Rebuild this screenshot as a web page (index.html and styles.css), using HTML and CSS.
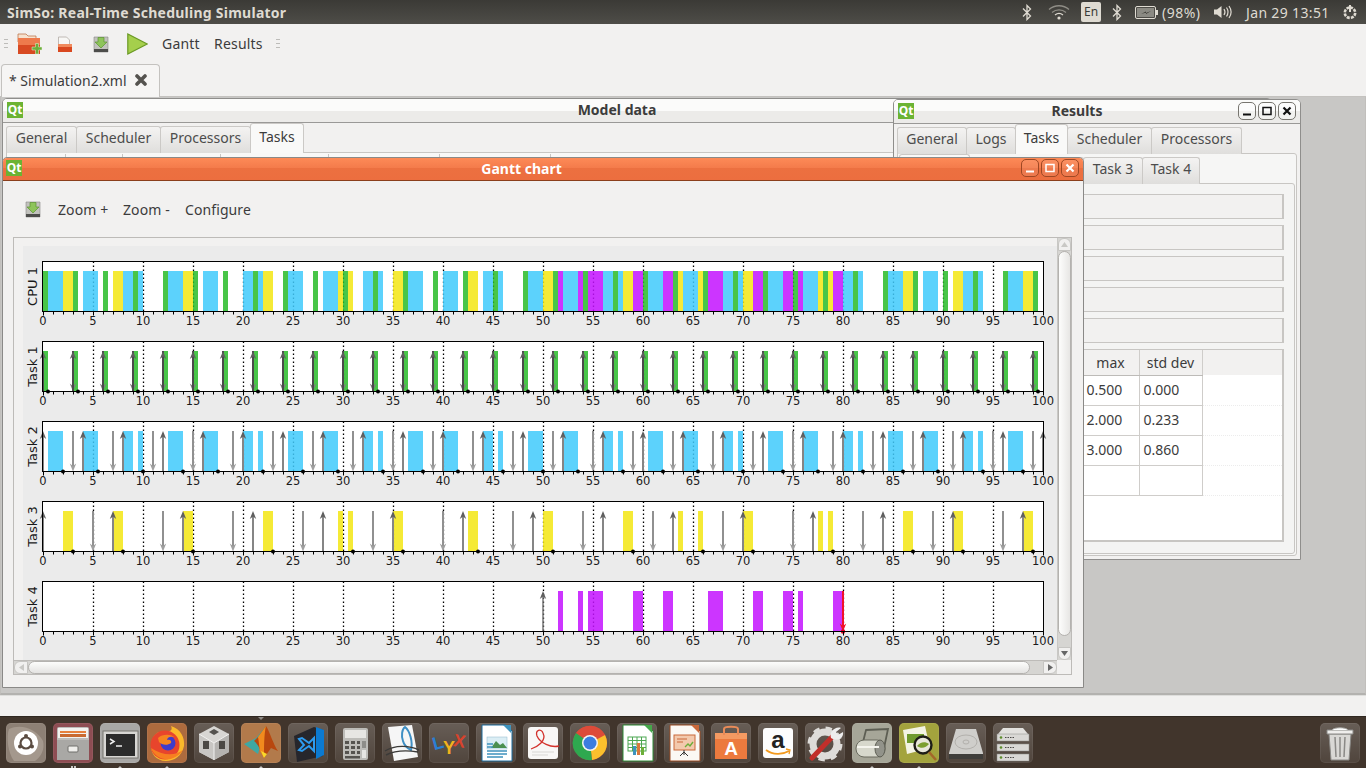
FILE: index.html
```html
<!DOCTYPE html>
<html lang="en">
<head>
<meta charset="utf-8">
<title>SimSo: Real-Time Scheduling Simulator</title>
<link rel="stylesheet" href="styles.css">
</head>
<body>
<header class="panel">
  <div class="panel-title">SimSo: Real-Time Scheduling Simulator</div>
  <div class="indicators">
    <svg class="ind ind-bt" width="10" height="17" viewBox="0 0 10 17"><path d="M1 4.5l7.5 7.5L5 15.5V1.5L8.5 5 1 12.5" fill="none" stroke="#dfdbd2" stroke-width="1.3"/></svg>
    <svg class="ind ind-wifi" width="22" height="16" viewBox="0 0 22 16"><g fill="none" stroke="#8f8d86" stroke-width="1.3"><path d="M1 5.5c5.500-5 14.500-5 20 0"/><path d="M4 8.500c4-3.500 10-3.500 14 0"/></g><path d="M7 11c2.500-2 5.500-2 8 0" fill="none" stroke="#dfdbd2" stroke-width="1.3"/><circle cx="11" cy="14" r="1.600" fill="#dfdbd2"/></svg>
    <span class="ind-en">En</span>
    <svg class="ind ind-bt2" width="10" height="17" viewBox="0 0 10 17"><path d="M1 4.500l7.500 7.500L5 15.500V1.500L8.500 5 1 12.500" fill="none" stroke="#dfdbd2" stroke-width="1.300"/></svg>
    <svg class="ind ind-batt" width="23" height="13" viewBox="0 0 23 13"><rect x=".5" y=".5" width="20" height="12" rx="1.500" fill="#4c4b46" stroke="#dfdbd2"/><rect x="2" y="2" width="17" height="9" fill="#8b8a83"/><rect x="21" y="4" width="2" height="5" fill="#dfdbd2"/><path d="M6 8l5-2.500v1.500L16 5l-5 3V6.500z" fill="#35342f"/></svg>
    <span class="ind-text ind-pct">(98%)</span>
    <svg class="ind ind-vol" width="20" height="16" viewBox="0 0 20 16"><path d="M1 5.500h3L8.500 2v12L4 10.500H1z" fill="#dfdbd2"/><g fill="none" stroke="#dfdbd2" stroke-width="1.200"><path d="M11 5c1.300 2 1.300 4 0 6"/><path d="M13.500 3.500c2 3 2 6 0 9"/><path d="M16 2c2.800 4 2.800 8 0 12"/></g></svg>
    <span class="ind-text ind-date">Jan 29 13:51</span>
    <svg class="ind ind-gear" width="16" height="17" viewBox="0 0 16 17"><path d="M8 3.500a5.200 5.200 0 1 1-.01 0" fill="none" stroke="#dfdbd2" stroke-width="2.600" stroke-dasharray="3 1.100"/><path d="M8 1v7" stroke="#dfdbd2" stroke-width="2"/></svg>
  </div>
</header>

<nav class="toolbar">
  <span class="grip"></span>
  <svg class="tool-new" width="25" height="22" viewBox="0 0 25 22"><path d="M1 1h8l2 2h8v6H1z" fill="#f6e2cf" stroke="#b8683a" stroke-width=".7"/><path d="M1 5h22v16H1z" fill="#d84a22"/><path d="M1 5h22v7H1z" fill="#ee7a4c"/><path d="M15 14h3.500v-3.500h3V14H25v3h-3.500v4h-3v-4H15z" fill="#6cae3a" stroke="#e6f3d8" stroke-width=".5"/></svg>
  <svg class="tool-open" width="16" height="17" viewBox="0 0 16 17"><path d="M1.500 1h8l3 3v7h-11z" fill="#f8f7f5" stroke="#b3aca6" stroke-width=".8"/><path d="M1 8h14v8H1z" fill="#d9481f"/><path d="M1 8h14v3H1z" fill="#f08a5d"/></svg>
  <svg class="tool-save" width="16" height="17" viewBox="0 0 16 17"><path d="M1 1h14v15H1z" fill="#c2c2bd" stroke="#888" stroke-width=".6"/><path d="M1 13h14v3H1z" fill="#4d4d4b"/><path d="M5 1.500h6V6h3l-6 6-6-6h3z" fill="#8ec45a" stroke="#5c9432" stroke-width=".7"/></svg>
  <svg class="tool-play" width="21" height="22" viewBox="0 0 21 22"><path d="M.8 1v20L20.200 11z" fill="#a5cf4c" stroke="#6b9a24" stroke-width="1.200"/></svg>
  <span class="tool-text tool-gantt">Gantt</span>
  <span class="tool-text tool-results">Results</span>
  <span class="grip grip-end"></span>
</nav>

<div class="doc-tabs">
  <div class="doc-tab">
    <span>* Simulation2.xml</span>
    <svg width="12" height="12" viewBox="0 0 12 12"><path d="M2 2l8 8M10 2l-8 8" stroke="#55534f" stroke-width="3.600" stroke-linecap="round"/></svg>
  </div>
</div>

<main class="mdi">
  <section class="win win-model">
    <div class="titlebar"><span class="qt">Qt</span><span class="win-title">Model data</span></div>
    <div class="win-body">
      <div class="tabs tabs-model">
        <span class="tab">General</span><span class="tab">Scheduler</span><span class="tab">Processors</span><span class="tab tab-on">Tasks</span>
      </div>
      <div class="model-pane">
        <i></i><i></i><i></i><i></i><i></i><i></i>
      </div>
    </div>
  </section>

  <section class="win win-results">
    <div class="titlebar"><span class="qt">Qt</span><span class="win-title">Results</span>
      <div class="winbtns">
        <span class="winbtn"><svg width="10" height="10" viewBox="0 0 10 10"><path d="M1 8.500h8" stroke="currentColor" stroke-width="2"/></svg></span>
        <span class="winbtn"><svg width="10" height="10" viewBox="0 0 10 10"><rect x="1" y="1.500" width="8" height="7" fill="none" stroke="currentColor" stroke-width="1.500"/></svg></span>
        <span class="winbtn"><svg width="10" height="10" viewBox="0 0 10 10"><path d="M1.500 1.500l7 7M8.500 1.500l-7 7" stroke="currentColor" stroke-width="2.200"/></svg></span>
      </div>
    </div>
    <div class="win-body">
      <div class="tabs tabs-results">
        <span class="tab">General</span><span class="tab">Logs</span><span class="tab tab-on">Tasks</span><span class="tab">Scheduler</span><span class="tab">Processors</span>
      </div>
      <div class="pane">
        <div class="tabs tabs-sub">
          <span class="tab tab-on">General</span><span class="tab">Task 1</span><span class="tab">Task 2</span><span class="tab">Task 3</span><span class="tab">Task 4</span>
        </div>
        <div class="subpane">
          <div class="stat-row"></div><div class="stat-row"></div><div class="stat-row"></div><div class="stat-row"></div><div class="stat-row"></div>
          <div class="stat-table">
            <table>
              <colgroup><col class="c-a"><col class="c-b"><col class="c-c"><col></colgroup>
              <thead><tr><th></th><th>max</th><th>std dev</th><th class="ghost-h"></th></tr></thead>
              <tbody>
                <tr><td></td><td>0.500</td><td>0.000</td><td class="ghost"></td></tr>
                <tr><td></td><td>2.000</td><td>0.233</td><td class="ghost"></td></tr>
                <tr><td></td><td>3.000</td><td>0.860</td><td class="ghost"></td></tr>
                <tr><td></td><td></td><td></td><td class="ghost"></td></tr>
              </tbody>
            </table>
          </div>
        </div>
      </div>
    </div>
  </section>

  <section class="win win-gantt">
    <div class="titlebar titlebar-on"><span class="qt">Qt</span><span class="win-title">Gantt chart</span>
      <div class="winbtns">
        <span class="winbtn"><svg width="10" height="10" viewBox="0 0 10 10"><path d="M1 8.500h8" stroke="currentColor" stroke-width="2"/></svg></span>
        <span class="winbtn"><svg width="10" height="10" viewBox="0 0 10 10"><rect x="1" y="1.500" width="8" height="7" fill="none" stroke="currentColor" stroke-width="1.500"/></svg></span>
        <span class="winbtn"><svg width="10" height="10" viewBox="0 0 10 10"><path d="M1.500 1.500l7 7M8.500 1.500l-7 7" stroke="currentColor" stroke-width="2.200"/></svg></span>
      </div>
    </div>
    <div class="gantt-tools">
      <svg width="16" height="17" viewBox="0 0 16 17"><path d="M1 1h14v15H1z" fill="#c2c2bd" stroke="#888" stroke-width=".6"/><path d="M1 13h14v3H1z" fill="#4d4d4b"/><path d="M5 1.500h6V6h3l-6 6-6-6h3z" fill="#8ec45a" stroke="#5c9432" stroke-width=".7"/></svg>
      <span class="gt gt-1">Zoom +</span><span class="gt gt-2">Zoom -</span><span class="gt gt-3">Configure</span>
    </div>
    <div class="scroll-frame">
      <div class="plot-view"><svg id="plots" class="plots" width="1034" height="414" viewBox="0 0 1034 414"></svg></div>
      <div class="vbar">
        <span class="sb-btn"><svg width="7" height="5" viewBox="0 0 7 5"><path d="M3.500 0L7 5H0z" fill="#c9c8c5"/></svg></span>
        <span class="v-thumb"></span>
        <span class="v-grip"></span>
        <span class="sb-btn sb-end"><svg width="7" height="5" viewBox="0 0 7 5"><path d="M0 0h7L3.500 5z" fill="#666"/></svg></span>
      </div>
      <div class="hbar">
        <span class="sb-btn"><svg width="5" height="7" viewBox="0 0 5 7"><path d="M5 0v7L0 3.500z" fill="#c9c8c5"/></svg></span>
        <span class="h-thumb"></span>
        <span class="h-rest"></span>
        <span class="sb-btn sb-end"><svg width="5" height="7" viewBox="0 0 5 7"><path d="M0 0l5 3.500L0 7z" fill="#666"/></svg></span>
      </div>
    </div>
  </section>
</main>

<div class="status"></div>

<footer class="dock">
  <div class="tile t-ubuntu"><svg viewBox="0 0 40 40"><path d="M3 6c12-6 28 0 34 12 2 8-2 16-8 20H8C2 30 0 14 3 6z" fill="#b8aca0" opacity=".55"/><circle cx="20" cy="20" r="12" fill="#fff"/><circle cx="20" cy="20" r="5.500" fill="none" stroke="#5b4c42" stroke-width="2.200"/><g fill="#5b4c42"><circle cx="20" cy="13" r="2"/><circle cx="14" cy="23.500" r="2"/><circle cx="26" cy="23.500" r="2"/></g></svg></div>
  <div class="tile t-files pip-2"><svg viewBox="0 0 40 40"><rect x="4" y="4" width="32" height="33" rx="2" fill="#bdbcb9"/><rect x="5" y="5" width="30" height="10" fill="#f3f2ef"/><rect x="7" y="8" width="26" height="2" fill="#e6813d"/><rect x="7" y="11" width="26" height="3" fill="#c96a30"/><rect x="4" y="17" width="32" height="20" fill="#a9a8a5"/><rect x="15" y="23" width="10" height="6" rx="1" fill="#efeeeb" stroke="#6f6e6b"/></svg></div>
  <div class="tile t-term pip"><svg viewBox="0 0 40 40"><rect x="3" y="8" width="35" height="27" fill="#d7d6d3" stroke="#77756f"/><rect x="6" y="11" width="29" height="22" fill="#2b2b2b"/><path d="M10 16l4 2.500-4 2.500" fill="none" stroke="#eee" stroke-width="1.500"/><path d="M16 23h6" stroke="#eee" stroke-width="1.500"/></svg></div>
  <div class="tile t-fire pip"><svg viewBox="0 0 40 40"><path d="M24 3c10 3 14 12 13 20-2 10-10 15-18 15C9 38 3 30 4 21c1-6 4-10 8-12 0 2 0 3 1 4 2-4 6-5 10-5 2-1 2-3 1-5z" fill="#fbb92b"/><circle cx="18" cy="22" r="14.500" fill="#e8452c"/><path d="M4 25c4 12 22 17 32 2-8 6-20 6-32-2z" fill="#f77f21"/><circle cx="21" cy="20" r="7.500" fill="#3f3ccb"/><path d="M11 15c4-4 13-4 16-1-3-1-7 0-7 3 3-1 5 1 4 3-4 3-9 2-12-1z" fill="#f5841f"/></svg></div>
  <div class="tile"><svg viewBox="0 0 40 40"><path d="M20 3l15 8v18l-15 8-15-8V11z" fill="#d8d6d3"/><path d="M20 20l15-9v18l-15 8z" fill="#b5b3b0"/><path d="M20 20L5 11v18l15 8z" fill="#c8c6c3"/><path d="M15 9l5-3 5 3-5 3z" fill="#55524e"/><rect x="9" y="18" width="6" height="8" fill="#4b4844"/><rect x="25" y="18" width="6" height="8" fill="#4b4844"/><path d="M20 20v17M20 20L5 11M20 20l15-9" stroke="#f1f0ee" stroke-width="1"/></svg></div>
  <div class="tile t-matlab pip pip-top"><svg viewBox="0 0 40 40"><path d="M3 21l12-6L25 3l-8 28z" fill="#3fa8a3"/><path d="M17 14L25 3c4 6 7 18 12 25l-7-3-7 10c-3-7-6-14-10-17z" fill="#b8470f"/><path d="M25 3c-2 8-2 22-2 32l-4-7c-1-5-1-9-2-14z" fill="#f18a1e"/><path d="M20 28l3 7 3-4c-2-1-4-2-6-3z" fill="#f8d92c"/></svg></div>
  <div class="tile"><svg viewBox="0 0 40 40"><path d="M6 13l20-9 9 3v26l-26 6z" fill="#26262c"/><path d="M28 4l8 3v25l-8 4z" fill="#0b7ad1"/><path d="M11 16l3-1 7 5 5-5v13l-5-5-7 5-3-1 5-5z" fill="none" stroke="#2d9cf0" stroke-width="2"/></svg></div>
  <div class="tile"><svg viewBox="0 0 40 40"><rect x="8" y="5" width="25" height="32" rx="2" fill="#bdbcb8"/><rect x="10" y="7" width="21" height="8" fill="#e7e6e3"/><g fill="#55534f"><rect x="10" y="18" width="4" height="3"/><rect x="16" y="18" width="4" height="3"/><rect x="22" y="18" width="3" height="3"/><rect x="10" y="23" width="4" height="3"/><rect x="16" y="23" width="4" height="3"/><rect x="22" y="23" width="3" height="3"/><rect x="10" y="28" width="4" height="3"/><rect x="16" y="28" width="4" height="3"/><rect x="22" y="28" width="3" height="3"/><rect x="10" y="33" width="15" height="2.500"/></g><rect x="27" y="18" width="4" height="7" fill="#8e8d89"/><rect x="27" y="27" width="4" height="8" fill="#e6e5e2"/></svg></div>
  <div class="tile"><svg viewBox="0 0 40 40"><path d="M6 4l24-2 6 32-24 4z" fill="#f6f6f6"/><path d="M29 27c2-8-1-19-6-23-3 2-4 9-2 14 1 4 4 7 8 9z" fill="none" stroke="#3f8fc4" stroke-width="2"/><path d="M3 28c10-6 24-6 34-1M4 32c8-4 20-5 32-3" fill="none" stroke="#3b3a38" stroke-width="1.400"/></svg></div>
  <div class="tile"><svg viewBox="0 0 40 40"><text class="lyx lyx-l" x="4" y="26" transform="rotate(-15 9 22)">L</text><text class="lyx lyx-y" x="14" y="31">Y</text><text class="lyx lyx-x" x="24" y="24" transform="rotate(10 30 20)">X</text></svg></div>
  <div class="tile"><svg viewBox="0 0 40 40"><path d="M6 2h24l6 6v30H6z" fill="#fff" stroke="#1d6d9e" stroke-width="1"/><path d="M27 2h8v8z" fill="#3f93bd"/><rect x="11" y="14" width="20" height="12" fill="#dbeef5" stroke="#8eb9cc" stroke-width=".5"/><path d="M15 25l5-7 4 4 3-2 4 5z" fill="#4a8f4f"/><g stroke="#3f93bd" stroke-width="1.300"><path d="M11 21h6M11 24h6M11 28h20M11 31h20M11 34h16"/></g></svg></div>
  <div class="tile"><svg viewBox="0 0 40 40"><rect x="5" y="4" width="30" height="32" rx="3" fill="#f8f7f6"/><path d="M8 26c6-2 16-8 12-16-2-5-8-3-6 3 3 7 14 12 22 10" fill="none" stroke="#d3312c" stroke-width="1.300"/><path d="M9 29h22M9 32h16" stroke="#d8d7d4" stroke-width="1.200"/></svg></div>
  <div class="tile"><svg viewBox="0 0 40 40"><circle cx="20" cy="20" r="17" fill="#dd4b39"/><path d="M20 20L35 12a17 17 0 0 1-13 25z" fill="#fbc02d"/><path d="M20 20l2 17A17 17 0 0 1 6 10z" fill="#2ea84f"/><path d="M6 10A17 17 0 0 1 35 12H20z" fill="#dd4b39"/><circle cx="20" cy="20" r="8" fill="#f4f4f4"/><circle cx="20" cy="20" r="6.500" fill="#3b7de0"/></svg></div>
  <div class="tile"><svg viewBox="0 0 40 40"><path d="M6 2h24l6 6v30H6z" fill="#fff" stroke="#2f8a36" stroke-width="1"/><path d="M27 2h8v8z" fill="#45a84a"/><g fill="none" stroke="#4da752" stroke-width="1"><rect x="11" y="14" width="18" height="14"/><path d="M11 17.500h18M11 21h18M11 24.500h18M15.500 14v14M20 14v14M24.500 14v14"/></g><rect x="16" y="23" width="3" height="9" fill="#3f93bd"/><rect x="20" y="20" width="3" height="12" fill="#d9773d"/><rect x="24" y="24" width="3" height="8" fill="#6cae3a"/></svg></div>
  <div class="tile"><svg viewBox="0 0 40 40"><path d="M6 2h24l6 6v30H6z" fill="#fbf8f4" stroke="#9a4a22" stroke-width="1"/><path d="M27 2h8v8z" fill="#c9683a"/><rect x="10" y="12" width="21" height="15" fill="#f3c9ad" stroke="#c9683a"/><path d="M13 16h10M13 19h6" stroke="#c9683a" stroke-width="1.200"/><path d="M21 24l3-3 2 2 3-4" fill="none" stroke="#6cae3a" stroke-width="1.400"/><path d="M20 27v5M20 29l-4 4M20 29l4 4" stroke="#333" stroke-width="1"/></svg></div>
  <div class="tile"><svg viewBox="0 0 40 40"><path d="M4 10h32v26H4z" fill="#ec7a3e"/><path d="M4 10h32v6H4z" fill="#f49a62"/><path d="M13 12V6c0-3 14-3 14 0v6" fill="none" stroke="#e98b58" stroke-width="2"/><text class="soft-a" x="20" y="32">A</text></svg></div>
  <div class="tile"><svg viewBox="0 0 40 40"><rect x="5" y="5" width="30" height="30" rx="3" fill="#fdfdfd"/><text class="amazon-a" x="20" y="25">a</text><path d="M8 27c7 5 16 5 23 1" fill="none" stroke="#f39a1e" stroke-width="1.800"/><path d="M28 26l4 1-1 4" fill="none" stroke="#f39a1e" stroke-width="1.300"/></svg></div>
  <div class="tile"><svg viewBox="0 0 40 40"><circle cx="20" cy="21" r="12" fill="none" stroke="#dedcd9" stroke-width="7"/><circle cx="20" cy="21" r="15" fill="none" stroke="#dedcd9" stroke-width="5" stroke-dasharray="6 5.800"/><path d="M7 35L28 13" stroke="#c22f2a" stroke-width="5" stroke-linecap="round"/><path d="M26 15c-2-6 4-12 10-10l-5 4 2 3 5-3c1 6-5 10-12 6z" fill="#eeeded"/></svg></div>
  <div class="tile t-roll pip"><svg viewBox="0 0 40 40"><path d="M14 7l22-1-5 24-23 1z" fill="none" stroke="#5d5e53" stroke-width="1.800"/><rect x="4" y="17" width="29" height="17" rx="8" fill="#d7d8cc" stroke="#68695d"/><ellipse cx="28" cy="25.500" rx="5" ry="8.500" fill="#92938a" stroke="#5d5e53"/><path d="M5 24h22" stroke="#f5f5ee" stroke-width="2"/></svg></div>
  <div class="tile t-mag pip"><svg viewBox="0 0 40 40"><path d="M4 7l22-4 5 22-23 6z" fill="#f3f3e3"/><rect x="8" y="11" width="17" height="9" fill="#6f9a2d"/><circle cx="24" cy="22" r="8.500" fill="#e8e7d9" stroke="#1e1d17" stroke-width="2.400"/><path d="M18 23c3-4 8-5 12-2-3 4-8 5-12 2z" fill="#7c9f2f"/><path d="M30 29l7 8" stroke="#a4672a" stroke-width="2.600"/></svg></div>
  <div class="tile"><svg viewBox="0 0 40 40"><path d="M10 6h20l7 24v6H3v-6z" fill="#cfcecb"/><ellipse cx="20" cy="19" rx="11" ry="7" fill="none" stroke="#b2b0ac"/><ellipse cx="20" cy="19" rx="3" ry="2" fill="none" stroke="#b2b0ac"/><rect x="3" y="31" width="34" height="5" fill="#3f3e3b"/></svg></div>
  <div class="tile"><svg viewBox="0 0 40 40"><path d="M10 5h20l5 6H5z" fill="#e2e1de"/><g fill="#d9d8d5" stroke="#8d8c88" stroke-width=".5"><rect x="4" y="11" width="32" height="7"/><rect x="4" y="21" width="32" height="7"/><rect x="4" y="31" width="32" height="7"/></g><g fill="#5c8d2c"><circle cx="8" cy="14.500" r="1.300"/><circle cx="8" cy="24.500" r="1.300"/><circle cx="8" cy="34.500" r="1.300"/></g><g stroke="#4c4b48" stroke-dasharray="1.500 1"><path d="M12 14.500h9M12 24.500h9M12 34.500h9"/></g></svg></div>
  <div class="tile tile-trash"><svg viewBox="0 0 40 40"><path d="M9 11h22l-2 26H11z" fill="#d9d8d5" stroke="#8a8986"/><path d="M7 7h26v4H7z" fill="#efeeec" stroke="#8a8986"/><path d="M15 14l1 20M20 14v20M25 14l-1 20" stroke="#8a8986" stroke-width="1.500"/><path d="M12 7c2-3 14-3 16 0" fill="#fff" stroke="#a3a29f"/></svg></div>
</footer>
<script src="plots.js"></script>
</body>
</html>
```

FILE: styles.css
```css
* { box-sizing: border-box; }
html, body { margin: 0; height: 100%; }
body {
  width: 1366px; height: 768px; overflow: hidden;
  display: flex; flex-direction: column;
  background: #f2f1f0; color: #3c3c3c;
  font: 14px "Noto Sans", "Open Sans", sans-serif;
}

/* top panel */
.panel {
  height: 24px; flex: none; display: flex; align-items: center;
  background: linear-gradient(#3b3a36, #4e4d48);
  color: #dfdbd2; padding-left: 7px;
}
.panel-title { font-weight: 700; font-size: 14px; letter-spacing: .25px; white-space: nowrap; }
.indicators { margin-left: auto; display: flex; align-items: center; height: 24px; padding-right: 8px; }
.ind { flex: none; }
.ind-text { font-size: 14px; white-space: nowrap; color: #dfdbd2; }
.ind-wifi { margin-left: 16px; }
.ind-en { width: 20px; height: 20px; margin-left: 11px; background: #dfdbd2; color: #3c3b37; border-radius: 2px; font-size: 12px; line-height: 20px; text-align: center; }
.ind-bt2 { margin-left: 11px; }
.ind-batt { margin-left: 13px; }
.ind-pct { margin-left: 4px; width: 38px; letter-spacing: .5px; }
.ind-vol { margin-left: 13px; }
.ind-date { margin-left: 13px; width: 84px; letter-spacing: .35px; }
.ind-gear { margin-left: 12px; }

/* toolbar */
.toolbar { height: 40px; flex: none; display: flex; align-items: center; padding-left: 4px; }
.grip { width: 4px; height: 11px; background: repeating-linear-gradient(#bdbcb9 0 1px, transparent 1px 4px); flex: none; }
.tool-new { margin-left: 9px; }
.tool-open { margin-left: 15px; }
.tool-save { margin-left: 20px; }
.tool-play { margin-left: 18px; }
.tool-text { font-size: 14px; color: #3c3c3c; letter-spacing: .2px; padding-bottom: 1px; }
.tool-gantt { margin-left: 14px; width: 52px; }
.tool-results { width: 62px; }
.grip-end { margin-left: 0; }

/* document tabs */
.doc-tabs { height: 33px; flex: none; padding-left: 1px; display: flex; align-items: flex-end; border-bottom: 1px solid #c4c2bf; }
.doc-tab {
  width: 159px; height: 33px; margin-bottom: -1px;
  display: flex; align-items: center; gap: 8px; padding: 0 0 2px 7px;
  background: #f6f5f4; border: 1px solid #c4c2bf; border-bottom: 0;
  border-radius: 4px 4px 0 0; font-size: 14px; white-space: nowrap;
}

/* mdi area */
.mdi { position: relative; height: 598px; flex: none; background: #c8c7c5; border: 1px solid #c1bfbc; border-top: 0; border-bottom: 2px solid #b3b2af; }
.status { height: 21px; flex: none; background: #f2f1f0; border-top: 1px solid #dededc; }

.win { position: absolute; display: flex; flex-direction: column; background: #f2f1f0; border: 1px solid #8f8e8c; border-radius: 5px 5px 0 0; }
.win-model { left: 1px; top: 1px; width: 1270px; height: 440px; z-index: 1; }
.win-results { left: 892px; top: 2px; width: 408px; height: 461px; z-index: 2; }
.win-gantt { left: 1px; top: 60px; width: 1082px; height: 531px; border-color: #8a8987; z-index: 3; }

.titlebar {
  position: relative; height: 24px; flex: none; display: flex; align-items: center;
  background: linear-gradient(#fbfbfa 0 50%, #ecebe9 50% 100%);
  border-bottom: 1px solid #9a9997; border-radius: 4px 4px 0 0;
  padding-left: 4px;
}
.titlebar-on { background: linear-gradient(#fd8a57, #f47b4b 45%, #ec7040 45%, #ec6e3f); border-bottom-color: #8b3f1c; color: #fff; padding-left: 3px; height: 23px; }
.qt { width: 16px; height: 16px; flex: none; margin-bottom: 2px; background: #6bb333; color: #fff; font: 700 12px/15px "Noto Sans", sans-serif; text-align: center; }
.win-title { flex: 1; text-align: center; font-weight: 700; font-size: 14px; color: #3c3c3c; padding: 0 60px 2px 0; }
.titlebar-on .win-title { color: #fff; padding-right: 62px; }
.winbtns { position: absolute; right: 4px; top: 2px; display: flex; gap: 2px; color: #111; }
.titlebar-on .winbtns { color: #fff; top: 1px; }
.winbtn { width: 18px; height: 18px; display: flex; align-items: center; justify-content: center; border: 1px solid #77756f; border-radius: 5px; background: rgba(255,255,255,.35); }
.titlebar-on .winbtn { border-color: #9f4824; background: rgba(255,255,255,.08); }

.win-body { flex: 1; min-height: 0; display: flex; flex-direction: column; padding: 3px; }
.tabs { display: grid; height: 27px; flex: none; font-size: 14px; position: relative; z-index: 1; }
.tabs-model { grid-template-columns: 70px 84px 90px 53px; }
.tabs-results { grid-template-columns: 69px 49px 52px 84px 90px; }
.tabs-sub { grid-template-columns: 70px 57px 57px 59px 57px; }
.tab {
  display: flex; align-items: center; justify-content: center; height: 27px; padding-bottom: 5px;
  background: linear-gradient(#f4f3f2, #dfdedc);
  border: 1px solid #cbc9c6; border-bottom: 0; border-radius: 3px 3px 0 0; margin-right: -1px;
  color: #4c4c4c; white-space: nowrap;
}
.tab-on { background: #f9f9f8; color: #3c3c3c; height: 30px; margin-top: -3px; padding-bottom: 4px; position: relative; z-index: 1; }
.model-pane { flex: 1; display: flex; align-items: flex-start; border: 1px solid #c8c6c3; margin-top: -1px; padding-top: 1px; padding-left: 2px; background: #f8f8f7; }
.model-pane i { display: block; height: 12px; border: 1px solid #c8c6c3; border-width: 0 1px 0 0; width: 57px; }
.model-pane i:nth-child(3) { width: 98px; }
.model-pane i:nth-child(4) { width: 108px; }
.model-pane i:nth-child(5) { width: 111px; }
.model-pane i:nth-child(6) { width: 111px; }
.pane { flex: 1; min-height: 0; display: flex; flex-direction: column; border: 1px solid #c8c6c3; border-radius: 0 3px 3px 3px; margin-top: -1px; padding: 3px 1px 1px 1px; background: #f6f6f5; }
.subpane { flex: 1; min-height: 0; margin-top: -1px; border: 1px solid #c8c6c3; border-radius: 0 3px 3px 3px; padding: 10px 10px 11px 10px; display: flex; flex-direction: column; gap: 6px; background: #f4f4f3; }
.stat-row { height: 25px; flex: none; border: 1px solid #c8c6c3; border-right-width: 2px; background: #f2f1f0; }
.stat-table { flex: 1; min-height: 0; background: #fff; border: 2px solid #c8c6c3; border-width: 1px 2px 2px 1px; margin-top: 0; }
.stat-table table { width: 100%; table-layout: fixed; border-collapse: collapse; font-size: 14px; color: #3c3c3c; }
.c-a { width: 171px; } .c-b { width: 57px; } .c-c { width: 63px; }
th { height: 25px; padding: 0; font-weight: 400; background: #f2f1f0; border-right: 1px solid #cfcdca; border-bottom: 1px solid #bdbbb8; }
td { height: 30px; padding: 0 0 2px 4px; border-right: 1px solid #cfcdca; border-bottom: 1px solid #cfcdca; white-space: nowrap; }
th.ghost-h { border: 0; }
td.ghost { border-right: 0; border-bottom: 1px dotted #ececec; }

/* gantt */
.gantt-tools { height: 56px; flex: none; display: flex; align-items: center; padding-left: 22px; font-size: 14px; letter-spacing: .1px; }
.gt { white-space: nowrap; }
.gt-1 { margin-left: 17px; width: 65px; }
.gt-2 { width: 62px; }
.scroll-frame {
  margin: 0 11px 0 10px; height: 438px; flex: none;
  display: grid; grid-template-columns: 1043px 14px; grid-template-rows: 422px 14px;
  border: 1px solid #bdbbb8;
}
.plot-view { background: #f2f1f0; padding: 8px 0 0 9px; overflow: hidden; }
.plots { display: block; background: #ebebeb; }
.plots text { font-family: "DejaVu Sans", sans-serif; fill: #1a1a1a; }
.tick-l { font-size: 11.5px; text-anchor: middle; }
.y-l { font-size: 13px; text-anchor: middle; }
.vbar { display: flex; flex-direction: column; background: #d6d5d2; border-left: 1px solid #c9c8c5; }
.sb-btn { flex: none; width: 13px; height: 13px; display: flex; align-items: center; justify-content: center; background: #f1f0ef; border: 1px solid #c6c5c2; border-radius: 6px 6px 0 0; }
.sb-end { border-radius: 0 0 6px 6px; }
.v-thumb { flex: none; height: 385px; background: linear-gradient(90deg, #fdfdfc, #e7e6e4); border: 1px solid #b4b2af; border-radius: 7px; position: relative; }
.v-grip { flex: 1; }
.hbar { display: flex; background: #d6d5d2; border-top: 1px solid #bdbbb8; height: 14px; }
.hbar .sb-btn { width: 14px; height: 13px; border-radius: 6px 0 0 6px; }
.hbar .sb-end { border-radius: 0 6px 6px 0; }
.h-thumb { flex: none; width: 1002px; background: linear-gradient(#fdfdfc, #e4e3e1); border: 1px solid #b4b2af; border-radius: 7px; }
.h-rest { flex: 1; }

/* launcher */
.dock { height: 52px; flex: none; display: flex; gap: 7px; padding: 6px 6px 0; background: #41352c; border-top: 1px solid #2f2720; position: relative; }
.tile { position: relative; width: 40px; height: 40px; flex: none; border-radius: 5px; background: linear-gradient(rgba(255,255,255,.2), rgba(255,255,255,.08)); box-shadow: inset 0 0 0 1px rgba(255,255,255,.06); }
.tile svg { display: block; width: 40px; height: 40px; }
.t-ubuntu { background: #8d8075; }
.t-files { background: #8e4d53; }
.t-term { background: #a9a8a6; }
.t-fire { background: #ad6b3e; }
.t-matlab { background: #b27a4b; }
.t-roll { background: #a6a698; }
.t-mag { background: #a3a33d; }
.tile-trash { margin-left: auto; }
.pip::after, .pip-2::after { content: ""; position: absolute; left: 17px; top: 43px; width: 0; height: 0; border: 3px solid transparent; border-top: 0; border-bottom: 3px solid #c9c8c5; }
.pip-2::after { left: 18px; width: 5px; height: 3px; border: 0; background: repeating-linear-gradient(90deg, #c9c8c5 0 2px, transparent 2px 3px); }
.pip-top::before { content: ""; position: absolute; left: 17px; top: -6px; width: 0; height: 0; border: 3px solid transparent; border-bottom: 0; border-top: 3px solid #8f8b86; }
.lyx { font: 700 18px "Liberation Sans", sans-serif; }
.lyx-l { fill: #2a7fd4; } .lyx-y { fill: #f2b31c; } .lyx-x { fill: #d9432c; }
.soft-a { font: 700 19px "Liberation Sans", sans-serif; fill: #fff; text-anchor: middle; }
.amazon-a { font: 700 24px "Liberation Sans", sans-serif; fill: #222; text-anchor: middle; }
```

FILE: plots.js
```js
(function () {
  var NS = 'http://www.w3.org/2000/svg';
  var svg = document.getElementById('plots');
  var X0 = 20, TOP0 = 15.5, STEP = 80, H = 50;
  var COL = { t1: '#28bb28', t2: '#3fcafc', t3: '#f3e613', t4: '#c312ff' };

  function el(name, attrs, text) {
    var e = document.createElementNS(NS, name);
    for (var k in attrs) e.setAttribute(k, attrs[k]);
    if (text !== undefined) e.textContent = text;
    svg.appendChild(e);
    return e;
  }
  function range(start, step, end) {
    var out = [];
    for (var v = start; v <= end; v += step) out.push(v);
    return out;
  }

  var t1 = range(0, 3, 99).map(function (k) { return [k, k + 0.5]; });
  var t2 = [];
  range(0, 12, 96).forEach(function (b) {
    [[0.5, 2], [4, 5.5], [8, 9], [9.5, 10]].forEach(function (s) {
      if (b + s[1] <= 100) t2.push([b + s[0], b + s[1]]);
    });
  });
  t2 = t2.filter(function (s) { return s[0] < 98.5; });
  var t3 = [[2,3],[7,8],[14,15],[22,23],[29.5,30],[30.5,31],[35,36],[42.5,43.5],[50,51],[58,59],[63.5,64],[65.5,66],[70,71],[77.5,78],[78.5,79],[86,87],[91,92],[98,99]];
  var t4 = [[51.5,52],[53.5,54],[54.5,56],[59,60],[62,63],[66.5,68],[71,72],[74,75],[75.5,76],[79,80]];

  var dots2 = [];
  range(0, 12, 96).forEach(function (b) {
    [2, 5.5, 10].forEach(function (d) { if (b + d < 100 && !(b === 96 && d > 2)) dots2.push(b + d); });
  });
  var rows = [
    { label: 'CPU 1', bars: [[t1, 't1'], [t2, 't2'], [t3, 't3'], [t4, 't4']], up: [], down: [], dots: [] },
    { label: 'Task 1', bars: [[t1, 't1']], up: range(0, 3, 99), down: range(3, 3, 99), dots: t1.map(function (s) { return s[1]; }), heavy: true },
    { label: 'Task 2', bars: [[t2, 't2']], up: range(0, 4, 100), down: range(3, 4, 99), dots: dots2 },
    { label: 'Task 3', bars: [[t3, 't3']], up: range(0, 7, 98), down: range(5, 7, 96), dots: [3,8,15,23,31,36,43.5,51,59,66,71,79,87,92,99] },
    { label: 'Task 4', bars: [[t4, 't4']], up: [50], down: [], dots: [], thin: true, miss: 80 }
  ];

  function upArrow(x, top, bottom, heavy, thin) {
    el('path', { d: 'M' + x + ' ' + bottom + 'V' + (top + 5), stroke: heavy ? '#4a4a4a' : thin ? '#707070' : '#858585', 'stroke-width': thin ? 1.4 : 2, fill: 'none' });
    el('path', { d: 'M' + x + ' ' + top + 'l3.2 8-3.200-2.500-3.200 2.500z', fill: '#5e5e5e' });
  }
  function downArrow(x, top, bottom, color, head) {
    el('path', { d: 'M' + x + ' ' + top + 'V' + (bottom - 5), stroke: color, 'stroke-width': 2, fill: 'none' });
    el('path', { d: 'M' + x + ' ' + bottom + 'l-3.200-8 3.200 2.500 3.200-2.500z', fill: head });
  }

  rows.forEach(function (row, i) {
    var top = TOP0 + STEP * i, bottom = top + H, barTop = top + 9.5;
    el('rect', { x: X0 - 0.5, y: top, width: 1001, height: H, fill: '#fff' });
    range(5, 5, 95).forEach(function (t) {
      var x = X0 + t * 10 + 0.5;
      el('path', { d: 'M' + x + ' ' + top + 'V' + bottom, stroke: '#000', 'stroke-width': 1.3, 'stroke-dasharray': '1.5 2.5', fill: 'none' });
    });
    row.bars.forEach(function (group) {
      group[0].forEach(function (s) {
        el('rect', { x: X0 + s[0] * 10, y: barTop, width: (s[1] - s[0]) * 10, height: H - 9.5, fill: COL[group[1]], 'fill-opacity': 0.85 });
      });
    });
    row.down.forEach(function (t) {
      downArrow(X0 + t * 10, barTop, bottom, row.heavy ? '#4a4a4a' : '#909090', row.heavy ? '#7d7d7d' : '#9f9f9f');
    });
    row.up.forEach(function (t) { upArrow(X0 + t * 10, barTop, bottom, row.heavy, row.thin); });
    if (row.miss) {
      downArrow(X0 + row.miss * 10, barTop, bottom, '#f0122a', '#f0122a');
      el('circle', { cx: X0 + row.miss * 10, cy: bottom, r: 2.2, fill: '#e8001c' });
    }
    el('rect', { x: X0 - 0.5, y: top, width: 1001, height: H, fill: 'none', stroke: '#000', 'stroke-width': 1 });
    row.dots.forEach(function (t) {
      el('circle', { cx: X0 + t * 10, cy: bottom, r: 2, fill: '#000' });
    });
    range(0, 1, 100).forEach(function (t) {
      var x = X0 + t * 10 + 0.5;
      el('path', { d: 'M' + x + ' ' + bottom + 'v' + (t % 5 === 0 ? 4 : 3), stroke: '#000', fill: 'none' });
    });
    range(0, 5, 100).forEach(function (t) {
      el('text', { class: 'tick-l', x: X0 + t * 10, y: bottom + 13.5 }, String(t));
    });
    var cy = top + H / 2;
    el('text', { class: 'y-l', x: 14, y: cy, transform: 'rotate(-90 14 ' + cy + ')' }, row.label);
  });
})();
```
